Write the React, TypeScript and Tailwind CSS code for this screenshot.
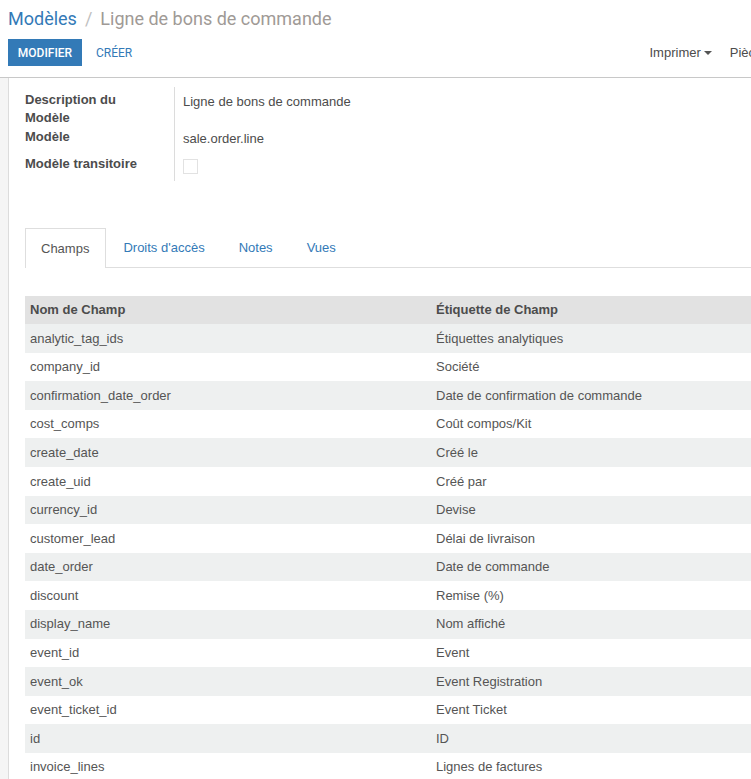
const rows: [string, string][] = [
  ["analytic_tag_ids", "Étiquettes analytiques"],
  ["company_id", "Société"],
  ["confirmation_date_order", "Date de confirmation de commande"],
  ["cost_comps", "Coût compos/Kit"],
  ["create_date", "Créé le"],
  ["create_uid", "Créé par"],
  ["currency_id", "Devise"],
  ["customer_lead", "Délai de livraison"],
  ["date_order", "Date de commande"],
  ["discount", "Remise (%)"],
  ["display_name", "Nom affiché"],
  ["event_id", "Event"],
  ["event_ok", "Event Registration"],
  ["event_ticket_id", "Event Ticket"],
  ["id", "ID"],
  ["invoice_lines", "Lignes de factures"],
];

export default function App() {
  return (
    <div className="w-[751px] h-[779px] overflow-hidden bg-white font-['Liberation_Sans',Arial,sans-serif] text-[13px] text-[#4c4c4c]">
      {/* control panel */}
      <div className="h-[78px] border-b border-[#c8c8c8] pl-2 pt-[7px] font-['Roboto',sans-serif]">
        <div className="flex items-center text-[18px] leading-[24px] whitespace-nowrap">
          <span className="text-[#337ab7]">Modèles</span>
          <span className="text-[#c0c0c0] px-2">/</span>
          <span className="text-[#a09a96]">Ligne de bons de commande</span>
        </div>
        <div className="mt-[8px] flex items-center">
          <button className="h-[27px] w-[74px] bg-[#337ab7] text-white text-[12px] font-medium">MODIFIER</button>
          <button className="ml-[14px] text-[#337ab7] text-[12px]">CRÉER</button>
          <div className="ml-auto flex items-center whitespace-nowrap text-[13px] text-[#4c4c4c] font-['Liberation_Sans',Arial,sans-serif] -mr-[59px]">
            <span className="flex items-center">
              Imprimer
              <span className="ml-[3px] border-x-[4px] border-x-transparent border-t-[4px] border-t-[#555]" />
            </span>
            <span className="ml-[18px]">Pièces jointes</span>
          </div>
        </div>
      </div>

      {/* form view */}
      <div className="bg-[#f5f5f5] pl-2 h-full">
        <div className="w-[900px] bg-white border-l border-[#dcdcdc] h-full pt-[13px] pl-4">
          <div className="flex">
            <div className="w-[150px] border-r border-[#dcdcdc] -mt-[4px] pt-[4px] pb-[8px]">
              <div className="font-bold leading-[18px]">Description du<br />Modèle</div>
              <div className="font-bold leading-[18px] mt-[1px]">Modèle</div>
              <div className="font-bold leading-[18px] mt-[9px]">Modèle transitoire</div>
            </div>
            <div className="pl-2">
              <div className="leading-[18px] pt-[2px] h-[37px]">Ligne de bons de commande</div>
              <div className="leading-[18px] pt-[2px] h-[21px]">sale.order.line</div>
              <div className="mt-[10px] w-[15px] h-[15px] border border-[#e2e2e2]" />
            </div>
          </div>

          {/* tabs */}
          <div className="mt-[47px] flex border-b border-[#dedede] h-[40px]">
            <div className="pl-[15px] pr-4 border border-b-0 border-[#dedede] bg-white h-[40px] -mb-px flex items-center text-[#555] mr-[1px]">Champs</div>
            <div className="px-4 flex items-center text-[#337ab7] mr-[2px]">Droits d'accès</div>
            <div className="px-4 flex items-center text-[#337ab7] mr-[2px]">Notes</div>
            <div className="px-4 flex items-center text-[#337ab7]">Vues</div>
          </div>

          {/* table */}
          <table className="mt-[28px] w-[812px] border-collapse">
            <thead>
              <tr className="bg-[#e2e2e2] h-[28px]">
                <th className="w-[406px] text-left font-bold pl-[5px] text-[#4c4c4c]">Nom de Champ</th>
                <th className="text-left font-bold pl-[5px] text-[#4c4c4c]">Étiquette de Champ</th>
              </tr>
            </thead>
            <tbody>
              {rows.map(([name, label], i) => (
                <tr key={name} className={i % 2 === 0 ? "bg-[#eef0f0] h-[28.6px]" : "bg-white h-[28.6px]"}>
                  <td className="pl-[5px] text-[#555]">{name}</td>
                  <td className="pl-[5px] text-[#555]">{label}</td>
                </tr>
              ))}
            </tbody>
          </table>
        </div>
      </div>
    </div>
  );
}
